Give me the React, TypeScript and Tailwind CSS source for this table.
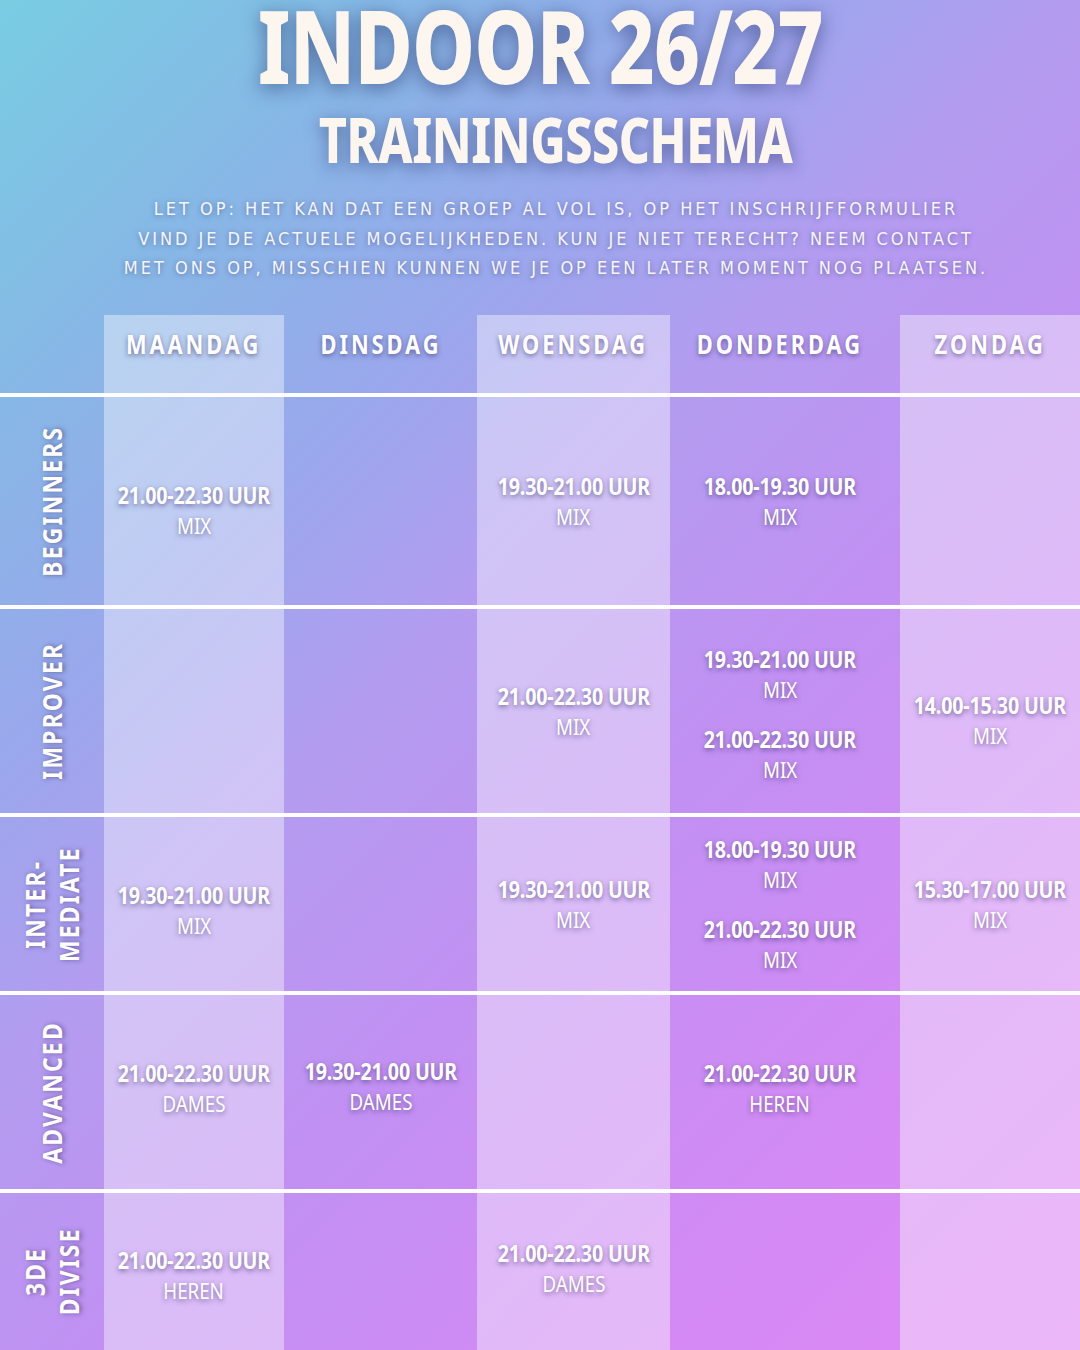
const sans = "font-['Noto_Sans',sans-serif]";
const para = "font-['DejaVu_Sans_Condensed','DejaVu_Sans',sans-serif]";
const softShadow = "[text-shadow:0_2px_6px_rgba(60,50,115,0.6)]";

type Slot = { time: string; group: string };
type Cell = { slots: Slot[]; shift?: string };
type Row = { label: string[]; height: string; cells: Cell[] };

const days = [
  { name: "MAANDAG", light: true, nudge: "" },
  { name: "DINSDAG", light: false, nudge: "" },
  { name: "WOENSDAG", light: true, nudge: "" },
  { name: "DONDERDAG", light: false, nudge: "pr-[10px]" },
  { name: "ZONDAG", light: true, nudge: "" },
];

const mix = (time: string): Slot => ({ time, group: "MIX" });

const rows: Row[] = [
  {
    label: ["BEGINNERS"],
    height: "h-[208px]",
    cells: [
      { slots: [mix("21.00-22.30 UUR")], shift: "pt-[18px]" },
      { slots: [] },
      { slots: [mix("19.30-21.00 UUR")] },
      { slots: [mix("18.00-19.30 UUR")] },
      { slots: [] },
    ],
  },
  {
    label: ["IMPROVER"],
    height: "h-[204px]",
    cells: [
      { slots: [] },
      { slots: [] },
      { slots: [mix("21.00-22.30 UUR")] },
      { slots: [mix("19.30-21.00 UUR"), mix("21.00-22.30 UUR")], shift: "pt-[6px]" },
      { slots: [mix("14.00-15.30 UUR")], shift: "pt-[18px]" },
    ],
  },
  {
    label: ["INTER-", "MEDIATE"],
    height: "h-[174px]",
    cells: [
      { slots: [mix("19.30-21.00 UUR")], shift: "pt-[12px]" },
      { slots: [] },
      { slots: [mix("19.30-21.00 UUR")] },
      { slots: [mix("18.00-19.30 UUR"), mix("21.00-22.30 UUR")] },
      { slots: [mix("15.30-17.00 UUR")] },
    ],
  },
  {
    label: ["ADVANCED"],
    height: "h-[194px]",
    cells: [
      { slots: [{ time: "21.00-22.30 UUR", group: "DAMES" }], shift: "pb-[8px]" },
      { slots: [{ time: "19.30-21.00 UUR", group: "DAMES" }], shift: "pb-[12px]" },
      { slots: [] },
      { slots: [{ time: "21.00-22.30 UUR", group: "HEREN" }], shift: "pb-[8px]" },
      { slots: [] },
    ],
  },
  {
    label: ["3DE", "DIVISE"],
    height: "h-[157px]",
    cells: [
      { slots: [{ time: "21.00-22.30 UUR", group: "HEREN" }], shift: "pt-[6px]" },
      { slots: [] },
      { slots: [{ time: "21.00-22.30 UUR", group: "DAMES" }], shift: "pb-[8px]" },
      { slots: [] },
      { slots: [] },
    ],
  },
];

function SlotBlock({ slot }: { slot: Slot }) {
  return (
    <div className="flex w-0 flex-col items-center whitespace-nowrap">
      <span className={`${sans} ${softShadow} scale-x-[0.82] text-[24px] font-bold leading-[30px] tracking-[-0.01em] text-white`}>
        {slot.time}
      </span>
      <span className={`${sans} ${softShadow} scale-x-[0.85] text-[22px] font-normal leading-[30px] text-white`}>
        {slot.group}
      </span>
    </div>
  );
}

export default function App() {
  return (
    <div className="h-[1350px] w-[1080px] overflow-hidden bg-[linear-gradient(135deg,#78cde2_0%,#88b6e6_18%,#99a8ec_31%,#b39cf0_44%,#c190f2_60%,#d28af4_80%,#df88f4_100%)]">
      {/* Heading */}
      <header className="flex h-[315px] flex-col items-center">
        <h1
          className={`${sans} scale-x-[0.78] whitespace-nowrap text-[102px] font-extrabold leading-[90px] tracking-[-0.01em] text-[#fdf6ee] [text-shadow:0_4px_22px_rgba(40,52,110,0.6)]`}
        >
          INDOOR 26/27
        </h1>
        <div className="flex flex-col items-center pl-[32px]">
          <h2
            className={`${sans} mt-[17px] scale-x-[0.77] whitespace-nowrap text-[63px] font-extrabold leading-none tracking-[-0.01em] text-[#fdf6ee] [text-shadow:0_4px_18px_rgba(40,52,110,0.55)]`}
          >
            TRAININGSSCHEMA
          </h2>
          <p
            className={`${para} mt-[24px] whitespace-nowrap text-center text-[18px] leading-[29.5px] tracking-[0.165em] text-[#f6f4fb] [text-shadow:0_1px_5px_rgba(50,60,120,0.55)]`}
          >
            LET OP: HET KAN DAT EEN GROEP AL VOL IS, OP HET INSCHRIJFFORMULIER
            <br />
            VIND JE DE ACTUELE MOGELIJKHEDEN. KUN JE NIET TERECHT? NEEM CONTACT
            <br />
            MET ONS OP, MISSCHIEN KUNNEN WE JE OP EEN LATER MOMENT NOG PLAATSEN.
          </p>
        </div>
      </header>

      {/* Schedule */}
      <div className="grid grid-cols-[104px_180px_193px_193px_230px_180px]">
        <div className="h-[78px]" />
        {days.map((d) => (
          <div
            key={d.name}
            className={`flex h-[78px] justify-center pt-[14px] ${d.nudge} ${d.light ? "bg-white/40" : ""}`}
          >
            <span className={`${sans} ${softShadow} scale-x-[0.84] whitespace-nowrap text-[26px] font-bold leading-[30px] tracking-[0.135em] text-white`}>
              {d.name}
            </span>
          </div>
        ))}

        {rows.map((row) => (
          <div key={row.label.join("")} className="col-span-6 grid grid-cols-subgrid">
            <div className="col-span-6 h-[4px] bg-white" />
            <div className={`flex items-center justify-center ${row.height}`}>
              <div
                className={`${sans} ${softShadow} rotate-180 scale-y-[0.875] whitespace-nowrap text-center text-[26px] font-bold leading-[34px] tracking-[0.1em] text-white [writing-mode:vertical-rl]`}
              >
                {row.label.map((l) => (
                  <div key={l}>{l}</div>
                ))}
              </div>
            </div>
            {row.cells.map((cell, i) => (
              <div
                key={i}
                className={`flex flex-col items-center justify-center gap-[20px] ${row.height} ${cell.shift ?? ""} ${days[i].nudge} ${days[i].light ? "bg-white/40" : ""}`}
              >
                {cell.slots.map((s, j) => (
                  <SlotBlock key={j} slot={s} />
                ))}
              </div>
            ))}
          </div>
        ))}
      </div>
    </div>
  );
}
